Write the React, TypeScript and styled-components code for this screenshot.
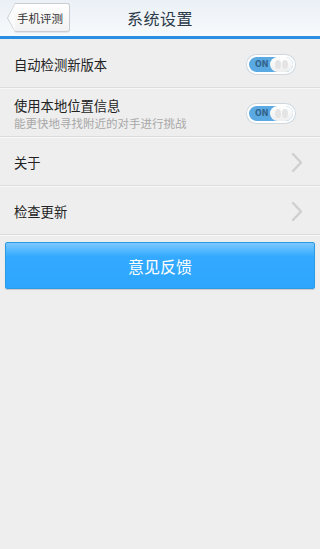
import styled, { createGlobalStyle } from "styled-components"

const GlobalStyle = createGlobalStyle`
  html, body {
    margin: 0;
    padding: 0;
    background: #eeeeee;
  }
  body {
    font-family: "Noto Sans CJK SC", "DejaVu Sans", sans-serif;
  }
`

interface SettingItem {
  title: string
  subtitle?: string
  kind: "toggle" | "link"
}

const items: SettingItem[] = [
  { title: "自动检测新版本", kind: "toggle" },
  { title: "使用本地位置信息", subtitle: "能更快地寻找附近的对手进行挑战", kind: "toggle" },
  { title: "关于", kind: "link" },
  { title: "检查更新", kind: "link" },
]

const Chevron = () => (
  <svg width="12" height="21" viewBox="0 0 12 21">
    <path d="M2 2 L10 10.5 L2 19" fill="none" stroke="#cfcfcf" strokeWidth="2.4" strokeLinecap="round" strokeLinejoin="round" />
  </svg>
)

export default function App() {
  return (
    <Page>
      <GlobalStyle />
      <Header>
        <BackButton>
          <BackArrow />
          <BackLabel>手机评测</BackLabel>
        </BackButton>
        <Title>系统设置</Title>
      </Header>
      <List>
        {items.map((item) => (
          <Row key={item.title}>
            <RowText>
              <RowTitle>{item.title}</RowTitle>
              {item.subtitle && <RowSubtitle>{item.subtitle}</RowSubtitle>}
            </RowText>
            {item.kind === "toggle" ? (
              <Toggle>
                <ToggleLabel>ON</ToggleLabel>
                <Knob />
              </Toggle>
            ) : (
              <Chevron />
            )}
          </Row>
        ))}
      </List>
      <FeedbackButton>意见反馈</FeedbackButton>
    </Page>
  )
}

const Page = styled.div`
  width: 320px;
  min-height: 549px;
  background: #eeeeee;
  display: flex;
  flex-direction: column;
`

const Header = styled.div`
  position: relative;
  height: 36px;
  background: linear-gradient(#eaf0f6, #f8fafc);
  border-bottom: 3px solid #2a8fe3;
  display: flex;
  align-items: center;
  justify-content: center;
`

const Title = styled.div`
  font-size: 16px;
  color: #2b3a48;
  letter-spacing: 0.5px;
`

const BackButton = styled.div`
  position: absolute;
  left: 7px;
  top: 3px;
  height: 29px;
  display: flex;
  align-items: center;
`

const BackArrow = styled.div`
  width: 0;
  height: 0;
  border-top: 15px solid transparent;
  border-bottom: 14px solid transparent;
  border-right: 8px solid #c9cdd1;
  position: relative;

  &::after {
    content: "";
    position: absolute;
    left: 1px;
    top: -14px;
    border-top: 14px solid transparent;
    border-bottom: 13px solid transparent;
    border-right: 7px solid #fbfbfb;
  }
`

const BackLabel = styled.div`
  height: 27px;
  padding: 0 6px 0 2px;
  display: flex;
  align-items: center;
  font-size: 11.5px;
  color: #333;
  background: linear-gradient(#ffffff, #f2f2f2);
  border: 1px solid #c9cdd1;
  border-left: none;
  border-radius: 0 3px 3px 0;
  box-shadow: 0 1px 1px rgba(0, 0, 0, 0.08);
`

const List = styled.div`
  display: flex;
  flex-direction: column;
`

const Row = styled.div`
  box-sizing: border-box;
  height: 49px;
  padding: 3px 17px 0 14px;
  display: flex;
  align-items: center;
  justify-content: space-between;
  border-bottom: 1px solid #dcdcdc;
  box-shadow: 0 1px 0 #f8f8f8;
`

const RowText = styled.div`
  display: flex;
  flex-direction: column;
`

const RowTitle = styled.div`
  font-size: 13.3px;
  color: #222;
  line-height: 19px;
`

const RowSubtitle = styled.div`
  font-size: 11.5px;
  color: #a8a8a8;
  line-height: 17px;
`

const Toggle = styled.div`
  position: relative;
  width: 44px;
  height: 15px;
  margin-right: 8px;
  border-radius: 10px;
  background: #5aa9e2;
  border: 2px solid #ffffff;
  box-shadow: 0 0 0 1px #cfd8df;
  display: flex;
  align-items: center;
`

const ToggleLabel = styled.span`
  font-family: "DejaVu Sans", sans-serif;
  font-size: 8px;
  font-weight: bold;
  color: #33648b;
  margin-left: 6px;
`

const Knob = styled.div`
  position: absolute;
  right: 0;
  top: 0;
  width: 23px;
  height: 15px;
  border-radius: 8px;
  background: linear-gradient(#ffffff, #eeeeee);

  &::before,
  &::after {
    content: "";
    position: absolute;
    top: 3px;
    width: 6px;
    height: 9px;
    border-radius: 50%;
    background: #e4e4e4;
  }
  &::before {
    left: 5px;
  }
  &::after {
    left: 12px;
  }
`

const FeedbackButton = styled.div`
  margin: 7px 5px 0;
  height: 45px;
  display: flex;
  align-items: center;
  justify-content: center;
  font-size: 16px;
  color: #ffffff;
  background: linear-gradient(#7cc8ff 0%, #33aaff 30%, #2ea6fd 100%);
  border: 1px solid #2b9be8;
  border-radius: 2px;
  box-shadow: 0 1px 1px rgba(0, 0, 0, 0.15);
`
